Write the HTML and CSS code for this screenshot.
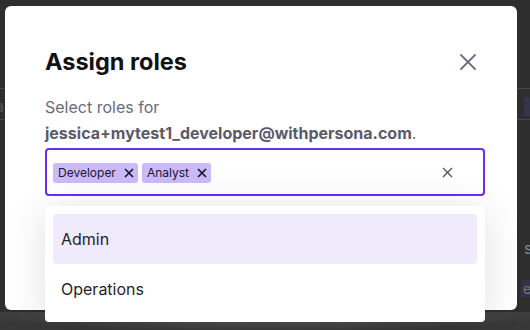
FILE: index.html
```html
<!DOCTYPE html>
<html>
<head>
    <title>Assign roles</title>
    <link rel="stylesheet" href="styles.css">
</head>
<body>
    <div class="page">
        <div class="bg-line bg-line-top"></div>
        <div class="bg-line bg-line-mid"></div>
        <div class="bg-left-text">a</div>
        <div class="bg-right-block"></div>
        <div class="bg-right-text">s</div>
        <div class="bg-right-tag">el</div>
        <div class="bg-bottom"></div>

        <div class="modal">
            <div class="modal-head">
                <h1 class="modal-title">Assign roles</h1>
                <button class="close-btn" aria-label="Close">
                    <svg width="16" height="16" viewBox="0 0 16 16">
                        <path d="M1 1 L15 15 M15 1 L1 15" stroke="#6e6e80" stroke-width="1.8" fill="none" stroke-linecap="round"/>
                    </svg>
                </button>
            </div>
            <p class="modal-desc">Select roles for <b>jessica+mytest1_developer@withpersona.com</b>.</p>

            <div class="select">
                <div class="select-box">
                    <div class="chips">
                        <span class="chip">Developer <span class="chip-x">
                            <svg width="10" height="10" viewBox="0 0 10 10"><path d="M1 1 L9 9 M9 1 L1 9" stroke="#1d1633" stroke-width="1.7" fill="none"/></svg>
                        </span></span>
                        <span class="chip">Analyst <span class="chip-x">
                            <svg width="10" height="10" viewBox="0 0 10 10"><path d="M1 1 L9 9 M9 1 L1 9" stroke="#1d1633" stroke-width="1.7" fill="none"/></svg>
                        </span></span>
                    </div>
                    <span class="clear-x">
                        <svg width="11" height="11" viewBox="0 0 11 11"><path d="M1 1 L10 10 M10 1 L1 10" stroke="#55556a" stroke-width="1.4" fill="none"/></svg>
                    </span>
                </div>
                <ul class="menu">
                    <li class="menu-item active">Admin</li>
                    <li class="menu-item">Operations</li>
                </ul>
            </div>
        </div>
    </div>
</body>
</html>
```

FILE: styles.css
```css
body {
    margin: 0;
    background: #2e2e2e;
    font-family: Inter, "Noto Sans", sans-serif;
}

.page {
    position: relative;
    width: 530px;
    height: 330px;
    overflow: hidden;
}

/* dimmed page behind the dialog */
.bg-line {
    position: absolute;
    left: 0;
    right: 0;
    height: 1px;
    background: #464646;
}

.bg-line-top {
    top: 88px;
}

.bg-line-mid {
    top: 119px;
}

.bg-left-text {
    position: absolute;
    left: -5px;
    top: 96px;
    color: #555;
    font-size: 16px;
}

.bg-right-block {
    position: absolute;
    left: 524px;
    top: 97px;
    width: 6px;
    height: 19px;
    background: #36344a;
}

.bg-right-text {
    position: absolute;
    left: 524px;
    top: 238px;
    color: #888;
    font-size: 16px;
}

.bg-right-tag {
    position: absolute;
    left: 521px;
    top: 280px;
    padding: 0 2px;
    background: #34324a;
    color: #777;
    font-size: 14px;
}

.bg-bottom {
    position: absolute;
    left: 0;
    right: 0;
    top: 312px;
    bottom: 0;
    background: radial-gradient(ellipse at 50% 0%, #5e5e5e 0%, #4a4a4a 45%, #383838 80%);
}

.modal {
    position: absolute;
    left: 5px;
    top: 6px;
    width: 512px;
    height: 304px;
    box-sizing: border-box;
    padding: 40px 32px 0 40px;
    background: #fff;
    border-radius: 6px;
}

.modal-head {
    display: flex;
    justify-content: space-between;
    align-items: center;
}

.modal-title {
    margin: 0;
    font-size: 23.5px;
    line-height: 32px;
    font-weight: 700;
    color: #111;
}

.close-btn {
    border: 0;
    background: none;
    padding: 0;
    margin-right: 9px;
    width: 16px;
    height: 16px;
}

.modal-desc {
    margin: 16px 0 0 0;
    font-size: 16px;
    line-height: 26px;
    color: #6b6b7c;
}

.modal-desc b {
    font-weight: 700;
    color: #5a5a6b;
}

.select {
    position: relative;
    margin-top: 2px;
}

.select-box {
    display: flex;
    align-items: center;
    justify-content: space-between;
    height: 48px;
    box-sizing: border-box;
    padding: 1px 30px 0 6px;
    border: 2px solid #6a2ef4;
    border-radius: 4px;
}

.chips {
    display: flex;
    gap: 4px;
}

.chip {
    display: flex;
    align-items: center;
    gap: 8px;
    height: 20px;
    padding: 0 4px 0 5px;
    background: #cbbafa;
    border-radius: 3px;
    font-size: 12px;
    color: #1d1633;
}

.chip-x {
    display: flex;
}

.clear-x {
    display: flex;
}

.menu {
    position: absolute;
    left: 0;
    right: 0;
    top: 58px;
    margin: 0;
    padding: 8px;
    list-style: none;
    background: #fff;
    border-radius: 4px;
    box-shadow: 0 4px 40px rgba(0, 0, 0, 0.12);
}

.menu-item {
    height: 50px;
    line-height: 50px;
    padding: 0 8px;
    font-size: 16px;
    color: #1f1f2b;
    border-radius: 4px;
}

.menu-item.active {
    background: #efebfd;
}
```
